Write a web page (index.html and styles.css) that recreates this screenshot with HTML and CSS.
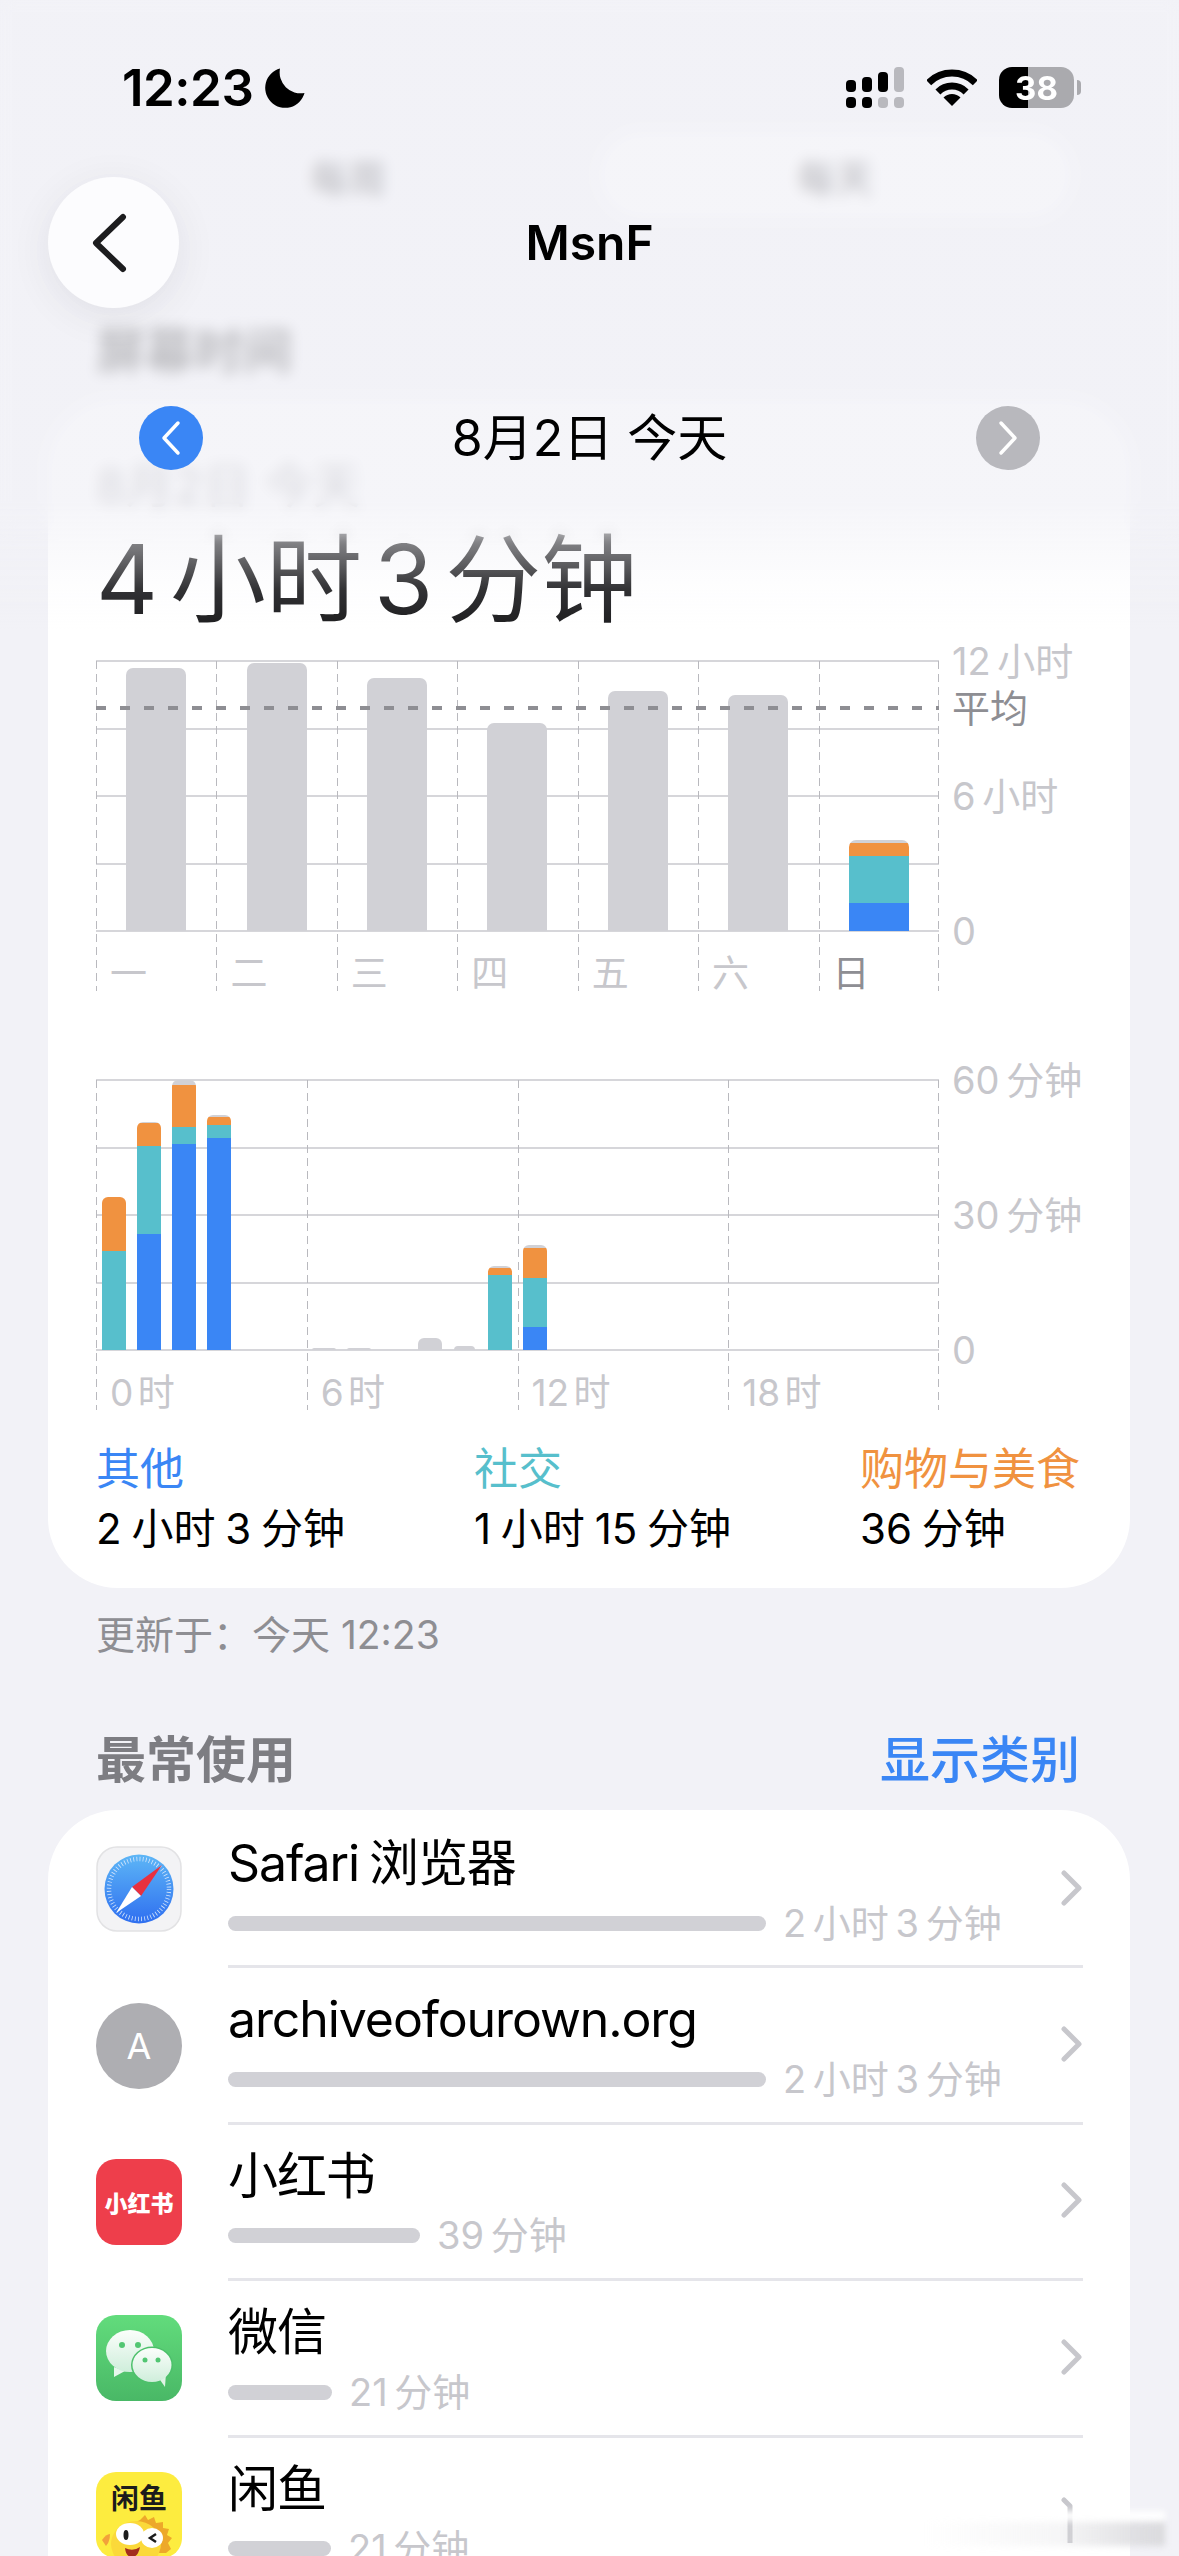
FILE: index.html
```html
<!DOCTYPE html>
<html lang="zh">
<head>
<meta charset="utf-8">
<title>屏幕时间</title>
<link rel="stylesheet" href="styles.css">
</head>
<body>
<main class="page">
  <div class="segment">
    <span class="seg-item">每周</span>
    <span class="seg-item seg-on">每天</span>
  </div>
  <h1 class="screen-title">屏幕时间</h1>

  <section class="card summary">
    <div class="date-under">8月2日 今天</div>
    <div class="total">4 小时 3 分钟</div>

    <div class="chart">
      <div class="plot">
        <div class="hlines"><i></i><i></i><i></i><i></i><i></i></div>
        <div class="cols week">
          <div class="col"><div class="slot"><div class="bar wide" style="height:263px"><b class="g" style="height:263px"></b></div></div><span class="tick">一</span></div>
          <div class="col"><div class="slot"><div class="bar wide" style="height:268px"><b class="g" style="height:268px"></b></div></div><span class="tick">二</span></div>
          <div class="col"><div class="slot"><div class="bar wide" style="height:253px"><b class="g" style="height:253px"></b></div></div><span class="tick">三</span></div>
          <div class="col"><div class="slot"><div class="bar wide" style="height:208px"><b class="g" style="height:208px"></b></div></div><span class="tick">四</span></div>
          <div class="col"><div class="slot"><div class="bar wide" style="height:240px"><b class="g" style="height:240px"></b></div></div><span class="tick">五</span></div>
          <div class="col"><div class="slot"><div class="bar wide" style="height:236px"><b class="g" style="height:236px"></b></div></div><span class="tick">六</span></div>
          <div class="col"><div class="slot"><div class="bar wide" style="height:91px"><b class="g" style="height:3px"></b><b class="o" style="height:13px"></b><b class="t" style="height:47px"></b><b class="bl" style="height:28px"></b></div></div><span class="tick tick-now">日</span></div>
        </div>
        <div class="avg"></div>
      </div>
      <div class="yaxis">
        <span>12 小时</span><span>6 小时</span><span>0</span>
        <span class="avg-label">平均</span>
      </div>
    </div>

    <div class="chart chart-day">
      <div class="plot">
        <div class="hlines"><i></i><i></i><i></i><i></i><i></i></div>
        <div class="cols day">
          <div class="col"><div class="slot"></div><span class="tick">0 时</span></div>
          <div class="col"><div class="slot"></div><span class="tick">6 时</span></div>
          <div class="col"><div class="slot"></div><span class="tick">12 时</span></div>
          <div class="col"><div class="slot"></div><span class="tick">18 时</span></div>
        </div>
        <div class="hours">
          <div class="hour"><div class="bar"><b class="o" style="height:54px"></b><b class="t" style="height:99px"></b></div></div>
          <div class="hour"><div class="bar"><b class="g" style="height:1px"></b><b class="o" style="height:23px"></b><b class="t" style="height:88px"></b><b class="bl" style="height:116px"></b></div></div>
          <div class="hour"><div class="bar"><b class="g" style="height:5px"></b><b class="o" style="height:42px"></b><b class="t" style="height:17px"></b><b class="bl" style="height:206px"></b></div></div>
          <div class="hour"><div class="bar"><b class="g" style="height:2px"></b><b class="o" style="height:8px"></b><b class="t" style="height:13px"></b><b class="bl" style="height:212px"></b></div></div>
          <div class="hour"></div>
          <div class="hour"></div>
          <div class="hour"><div class="bar"><b class="g" style="height:2px"></b></div></div>
          <div class="hour"><div class="bar"><b class="g" style="height:2px"></b></div></div>
          <div class="hour"></div>
          <div class="hour"><div class="bar"><b class="g" style="height:12px"></b></div></div>
          <div class="hour"><div class="bar bar-thin"><b class="g" style="height:4px"></b></div></div>
          <div class="hour"><div class="bar"><b class="g" style="height:2px"></b><b class="o" style="height:7px"></b><b class="t" style="height:75px"></b></div></div>
          <div class="hour"><div class="bar"><b class="g" style="height:3px"></b><b class="o" style="height:30px"></b><b class="t" style="height:49px"></b><b class="bl" style="height:23px"></b></div></div>
        </div>
      </div>
      <div class="yaxis yaxis-day">
        <span>60 分钟</span><span>30 分钟</span><span>0</span>
      </div>
    </div>

    <div class="legend">
      <div><div class="leg-name c-blue">其他</div><div class="leg-val">2 小时 3 分钟</div></div>
      <div><div class="leg-name c-teal">社交</div><div class="leg-val">1 小时 15 分钟</div></div>
      <div><div class="leg-name c-orange">购物与美食</div><div class="leg-val">36 分钟</div></div>
    </div>
  </section>

  <p class="updated">更新于：今天 12:23</p>

  <div class="section-head">
    <h2 class="section-title">最常使用</h2>
    <span class="section-link">显示类别</span>
  </div>

  <section class="card apps">
    <div class="row">
      <svg class="icon" viewBox="0 0 86 86">
        <defs><linearGradient id="sf" x1="0" y1="0" x2="0" y2="1"><stop offset="0" stop-color="#5db6f6"/><stop offset="1" stop-color="#2f6ff0"/></linearGradient></defs>
        <rect x="1" y="1" width="84" height="84" rx="20" fill="#f3f3f5" stroke="#e2e2e4" stroke-width="1.5"/>
        <circle cx="43" cy="43" r="34.5" fill="url(#sf)"/>
        <circle cx="43" cy="43" r="30" fill="none" stroke="#d6e6fb" stroke-width="4.5" stroke-dasharray="0.8 2.35"/>
        <polygon points="66,19 36,41 45,50" fill="#e8313f"/>
        <polygon points="20,67 36,41 45,50" fill="#fff"/>
      </svg>
      <div class="row-body">
        <div class="row-main">
          <div class="app-name">Safari 浏览器</div>
          <div class="usage"><span class="use-bar" style="width:538px"></span><span class="use-time">2 小时 3 分钟</span></div>
        </div>
        <svg class="chev" viewBox="0 0 22 36"><path d="M3 3 L18 18 L3 33"/></svg>
      </div>
    </div>
    <div class="row">
      <div class="icon site-icon">A</div>
      <div class="row-body">
        <div class="row-main">
          <div class="app-name">archiveofourown.org</div>
          <div class="usage"><span class="use-bar" style="width:538px"></span><span class="use-time">2 小时 3 分钟</span></div>
        </div>
        <svg class="chev" viewBox="0 0 22 36"><path d="M3 3 L18 18 L3 33"/></svg>
      </div>
    </div>
    <div class="row">
      <div class="icon xhs-icon">小红书</div>
      <div class="row-body">
        <div class="row-main">
          <div class="app-name">小红书</div>
          <div class="usage"><span class="use-bar" style="width:192px"></span><span class="use-time">39 分钟</span></div>
        </div>
        <svg class="chev" viewBox="0 0 22 36"><path d="M3 3 L18 18 L3 33"/></svg>
      </div>
    </div>
    <div class="row">
      <svg class="icon" viewBox="0 0 86 86">
        <defs>
          <linearGradient id="wx" x1="0" y1="0" x2="0" y2="1"><stop offset="0" stop-color="#62dc7c"/><stop offset="1" stop-color="#49b866"/></linearGradient>
          <linearGradient id="wb" x1="0" y1="0" x2="0" y2="1"><stop offset="0" stop-color="#fbfefb"/><stop offset="1" stop-color="#cfeedb"/></linearGradient>
        </defs>
        <rect width="86" height="86" rx="20" fill="url(#wx)"/>
        <path d="M18 52 L18 62 L29 56 Z" fill="#e6f7ec"/>
        <ellipse cx="34" cy="36" rx="24" ry="21" fill="url(#wb)"/>
        <circle cx="26" cy="30" r="3" fill="#52c672"/><circle cx="42" cy="30" r="3" fill="#52c672"/>
        <ellipse cx="56" cy="50" rx="21" ry="18.5" fill="#4cc06a"/>
        <path d="M62 62 L69 72 L70 58 Z" fill="#dff3e6"/>
        <ellipse cx="56" cy="50" rx="19.5" ry="17" fill="url(#wb)"/>
        <circle cx="49" cy="45" r="2.5" fill="#52c672"/><circle cx="62" cy="45" r="2.5" fill="#52c672"/>
      </svg>
      <div class="row-body">
        <div class="row-main">
          <div class="app-name">微信</div>
          <div class="usage"><span class="use-bar" style="width:104px"></span><span class="use-time">21 分钟</span></div>
        </div>
        <svg class="chev" viewBox="0 0 22 36"><path d="M3 3 L18 18 L3 33"/></svg>
      </div>
    </div>
    <div class="row">
      <svg class="icon" viewBox="0 0 86 86">
        <rect width="86" height="86" rx="20" fill="#fdec3f"/>
        <text class="xy-text" x="43" y="37" text-anchor="middle">闲鱼</text>
        <path d="M44 48 l5 -5 l3 5 l6 -3 l2 6 l7 -1 l0 6 l6 1 l-2 6 l5 3 l-4 5 l3 6 l-5 4 H20 V60 Z" fill="#eda82a"/>
        <ellipse cx="40" cy="72" rx="25" ry="23" fill="#fbd93a"/>
        <ellipse cx="34" cy="62" rx="14" ry="11" fill="#fff"/>
        <ellipse cx="56" cy="66" rx="11" ry="10" fill="#fff"/>
        <ellipse cx="30" cy="63" rx="2.5" ry="5" fill="#1c1c1c"/>
        <path d="M60 62 l-6 4 l6 4" fill="none" stroke="#1c1c1c" stroke-width="2.5"/>
        <path d="M29 76 q8 4 15 -1 q-2 10 -8 10 q-6 0 -7 -9 Z" fill="#a32c1e"/>
        <path d="M6 68 q4 -6 8 -6 q0 8 -4 12 Z" fill="#f2a13a"/>
      </svg>
      <div class="row-body">
        <div class="row-main">
          <div class="app-name">闲鱼</div>
          <div class="usage"><span class="use-bar" style="width:103px"></span><span class="use-time">21 分钟</span></div>
        </div>
        <svg class="chev chev-cut" viewBox="0 0 22 46"><path d="M3 3 L9 9 V46"/></svg>
      </div>
    </div>
  </section>
</main>

<div class="frost"></div>
<div class="fade"></div>

<header class="top">
  <div class="status">
    <div class="clock">
      <span class="time">12:23</span>
      <svg class="moon" viewBox="0 0 40 40"><path d="M15 0.5 A20 20 0 1 0 39.5 25 A21 21 0 0 1 15 0.5 Z"/></svg>
    </div>
    <div class="status-icons">
      <svg class="signal" viewBox="0 0 58 41">
        <rect x="0" y="13" width="10" height="12" rx="4"/><rect x="16" y="10" width="10" height="15" rx="4"/><rect x="32" y="5" width="10" height="20" rx="4"/><rect class="off" x="48" y="0" width="10" height="25" rx="4"/>
        <rect x="0" y="30" width="10" height="11" rx="4"/><rect x="16" y="30" width="10" height="11" rx="4"/><rect class="off" x="32" y="30" width="10" height="11" rx="4"/><rect class="off" x="48" y="30" width="10" height="11" rx="4"/>
      </svg>
      <svg class="wifi" viewBox="0 0 50 37">
        <path d="M1.7 13.7 A33 33 0 0 1 48.3 13.7" fill="none" stroke="#000" stroke-width="7"/>
        <path d="M10.9 22.9 A20 20 0 0 1 39.1 22.9" fill="none" stroke="#000" stroke-width="7"/>
        <path d="M25 37 L16.5 28.5 A12 12 0 0 1 33.5 28.5 Z"/>
      </svg>
      <div class="battery">
        <span class="batt-level">38</span>
        <i class="batt-tip"></i>
      </div>
    </div>
  </div>

  <div class="nav">
    <button class="back" type="button" aria-label="返回">
      <svg viewBox="0 0 36 60"><path d="M32 4 L5 30 L32 56"/></svg>
    </button>
    <div class="nav-title">MsnF</div>
  </div>

  <div class="date-row">
    <span class="round round-on"><svg viewBox="0 0 24 36"><path d="M19 3 L5 18 L19 33"/></svg></span>
    <span class="date-text">8月2日 今天</span>
    <span class="round round-off"><svg viewBox="0 0 24 36"><path d="M5 3 L19 18 L5 33"/></svg></span>
  </div>
</header>

<div class="smudge"></div>
</body>
</html>
```
FILE: styles.css
```css
* { box-sizing: border-box; }
html, body {
  margin: 0;
  width: 1179px;
  height: 2556px;
  overflow: hidden;
  background: #f2f2f7;
}
body {
  position: relative;
  font-family: "Inter", "Noto Sans CJK SC", sans-serif;
  color: #000;
}
h1, h2, p { margin: 0; font: inherit; }

.page { padding-top: 133px; }

/* blurred content scrolled under the header */
.segment {
  display: flex;
  margin: 0 109px 0 96px;
  height: 84px;
}
.seg-item {
  flex: 1;
  display: flex;
  align-items: center;
  justify-content: center;
  font-size: 38px;
  font-weight: 700;
  color: #3c3c40;
  border-radius: 42px;
}
.seg-on { background: #fff; flex: 0 0 470px; }
.screen-title {
  margin: 105px 0 18px 96px;
  font-size: 49px;
  line-height: 60px;
  font-weight: 700;
  color: #000;
}

.card {
  margin: 0 49px 0 48px;
  background: #fff;
  border-radius: 70px;
}
.summary { padding: 56px 50px 29px 48px; }
.date-under {
  font-size: 48px;
  line-height: 60px;
  color: #808085;
}
.total {
  margin-top: 9px;
  height: 108px;
  font-size: 96px;
  line-height: 108px;
  color: #1c1c1e;
  word-spacing: -15px;
  white-space: nowrap;
}

/* charts */
.chart {
  display: flex;
  gap: 13px;
  margin-top: 28px;
}
.chart-day { margin-top: 89px; height: 330px; }
.plot {
  position: relative;
  flex: 0 0 843px;
  height: 330px;
}
.hlines {
  position: absolute;
  left: 0;
  right: 0;
  top: -1px;
  height: 272px;
  display: flex;
  flex-direction: column;
  justify-content: space-between;
}
.hlines i { display: block; height: 2px; background: #d6d6da; }
.cols {
  position: absolute;
  inset: 0;
  display: flex;
}
.col {
  flex: 1;
  display: flex;
  flex-direction: column;
  background: repeating-linear-gradient(#b9b9be 0 8px, transparent 8px 13px) left top / 1px 100% no-repeat;
}
.col:last-child {
  background:
    repeating-linear-gradient(#b9b9be 0 8px, transparent 8px 13px) left top / 1px 100% no-repeat,
    repeating-linear-gradient(#b9b9be 0 8px, transparent 8px 13px) right top / 1px 100% no-repeat;
}
.slot {
  height: 270px;
  flex: none;
  display: flex;
  align-items: flex-end;
  justify-content: center;
}
.tick {
  font-size: 37px;
  line-height: 48px;
  margin-top: 19px;
  padding-left: 14px;
  color: #c7c7cc;
  word-spacing: -6px;
  white-space: nowrap;
}
.tick-now { color: #8e8e93; }

.bar {
  display: flex;
  flex-direction: column;
  width: 24px;
  border-radius: 6px 6px 0 0;
  overflow: hidden;
}
.bar-thin { width: 21px; }
.bar.wide { width: 60px; border-radius: 7px 7px 0 0; }
.bar b { display: block; flex: none; }
.g { background: #d1d1d6; }
.o { background: #f09240; }
.t { background: #57bfcc; }
.bl { background: #3a86f5; }

.avg {
  position: absolute;
  left: 0;
  right: 0;
  top: 45px;
  height: 4px;
  background: repeating-linear-gradient(90deg, #8e8e93 0 10px, transparent 10px 24px);
}

.hours {
  position: absolute;
  left: 0;
  top: 0;
  width: 843px;
  height: 270px;
  display: grid;
  grid-template-columns: repeat(24, 1fr);
  grid-template-rows: 270px;
}
.hour {
  display: flex;
  align-items: flex-end;
  justify-content: center;
}

.yaxis {
  position: relative;
  flex: 1;
  height: 310px;
  margin-top: -20px;
  display: flex;
  flex-direction: column;
  justify-content: space-between;
  font-size: 38px;
  line-height: 40px;
  color: #c7c7cc;
  word-spacing: -4px;
  white-space: nowrap;
}
.avg-label {
  position: absolute;
  left: 0;
  top: 47px;
  color: #8e8e93;
}

/* legend */
.legend {
  display: flex;
  justify-content: space-between;
  margin-top: 31px;
}
.leg-name {
  font-size: 44px;
  line-height: 56px;
}
.leg-val {
  margin-top: 2px;
  font-size: 42px;
  line-height: 60px;
  word-spacing: -2px;
  white-space: nowrap;
}
.c-blue { color: #3a86f5; }
.c-teal { color: #57bfcc; }
.c-orange { color: #f09240; }

.updated {
  margin: 22px 0 0 96px;
  font-size: 39px;
  line-height: 50px;
  color: #8e8e93;
}
.section-head {
  display: flex;
  justify-content: space-between;
  align-items: center;
  margin: 66px 99px 24px 96px;
  height: 60px;
}
.section-title {
  font-size: 50px;
  font-weight: 600;
  color: #7d7d82;
}
.section-link {
  font-size: 50px;
  font-weight: 500;
  color: #3a86f5;
}

/* app rows */
.apps { padding: 2px 0 0 48px; height: 1000px; }
.row {
  display: flex;
  align-items: center;
  gap: 46px;
  height: 156.4px;
}
.icon {
  flex: 0 0 86px;
  width: 86px;
  height: 86px;
  display: block;
  margin-top: -2px;
}
.site-icon {
  display: flex;
  align-items: center;
  justify-content: center;
  border-radius: 50%;
  background: #aeaeb2;
  color: #fff;
  font-size: 36px;
}
.xhs-icon {
  display: flex;
  align-items: center;
  justify-content: center;
  border-radius: 20px;
  background: #ee3e4b;
  color: #fff;
  font-size: 23px;
  font-weight: 900;
}
.xy-text {
  font-size: 28px;
  font-weight: 700;
  fill: #1c1c1c;
}
.row-body {
  flex: 1;
  align-self: stretch;
  display: flex;
  align-items: center;
  margin-right: 47px;
  border-bottom: 3px solid #e5e5ea;
}
.row:last-child .row-body { border-bottom: 0; }
.row-main {
  flex: 1;
  align-self: flex-start;
  padding-top: 21px;
}
.app-name {
  font-size: 50px;
  line-height: 60px;
  letter-spacing: -1.1px;
  word-spacing: -3px;
}
.usage {
  display: flex;
  align-items: center;
  gap: 17px;
  margin-top: 7px;
  height: 40px;
}
.use-bar {
  flex: none;
  height: 15px;
  margin-top: 6px;
  border-radius: 8px;
  background: #d1d1d6;
}
.use-time {
  font-size: 38px;
  color: #c7c7cc;
  word-spacing: -4px;
}
.chev {
  flex: none;
  width: 22px;
  height: 36px;
  margin: -2px 0 0;
}
.chev path {
  fill: none;
  stroke: #c7c7cc;
  stroke-width: 5;
  stroke-linecap: round;
  stroke-linejoin: round;
}
.chev-cut { height: 46px; margin-top: 8px; }

/* header layers */
.frost {
  position: absolute;
  left: 0;
  top: 0;
  width: 100%;
  height: 545px;
  -webkit-backdrop-filter: blur(7px);
  backdrop-filter: blur(7px);
  -webkit-mask-image: linear-gradient(#000 0, #000 92%, transparent 100%);
  mask-image: linear-gradient(#000 0, #000 92%, transparent 100%);
}
.fade {
  position: absolute;
  left: 0;
  top: 0;
  width: 100%;
  height: 630px;
  background: linear-gradient(rgba(242,242,247,.78) 0, rgba(242,242,247,.78) 500px, rgba(242,242,247,.42) 550px, rgba(242,242,247,.1) 590px, rgba(242,242,247,0) 630px);
}
.top {
  position: absolute;
  left: 0;
  top: 0;
  width: 100%;
}
.status {
  display: flex;
  justify-content: space-between;
  align-items: center;
  margin-top: 67px;
  padding: 0 105px 0 122px;
  height: 41px;
}
.clock { display: flex; align-items: center; gap: 12px; }
.time {
  font-size: 51px;
  line-height: 50px;
  font-weight: 600;
  letter-spacing: -0.5px;
}
.moon { width: 40px; height: 40px; }
.status-icons { display: flex; align-items: center; }
.signal { width: 58px; height: 41px; }
.signal .off { fill: #b9b9be; }
.wifi { width: 50px; height: 37px; margin-left: 23px; }
.battery {
  position: relative;
  width: 75px;
  height: 41px;
  margin-left: 22px;
  border-radius: 13px;
  background: linear-gradient(90deg, #000 0 29px, #aaaaae 29px);
  display: flex;
  align-items: center;
  justify-content: center;
}
.batt-level {
  font-size: 33px;
  font-weight: 700;
  color: #fff;
}
.batt-tip {
  position: absolute;
  left: 78px;
  top: 13px;
  width: 4px;
  height: 15px;
  border-radius: 0 4px 4px 0;
  background: #aaaaae;
}

.nav {
  display: grid;
  grid-template-columns: 131px 1fr 131px;
  align-items: center;
  margin-top: 69px;
  padding: 0 48px;
  height: 131px;
}
.back {
  width: 131px;
  height: 131px;
  padding: 0;
  border: 0;
  border-radius: 50%;
  background: #fcfcfe;
  box-shadow: 0 8px 40px rgba(0,0,0,.08);
  display: flex;
  align-items: center;
  justify-content: center;
}
.back svg { width: 36px; height: 60px; margin-left: -10px; }
.back path {
  fill: none;
  stroke: #1c1c1e;
  stroke-width: 6;
  stroke-linecap: round;
  stroke-linejoin: round;
}
.nav-title {
  text-align: center;
  font-size: 48px;
  font-weight: 600;
}
.date-row {
  display: flex;
  justify-content: space-between;
  align-items: center;
  margin-top: 98px;
  padding: 0 139px;
  height: 64px;
}
.date-text { font-size: 50px; line-height: 60px; }
.round {
  width: 64px;
  height: 64px;
  border-radius: 50%;
  display: flex;
  align-items: center;
  justify-content: center;
}
.round svg { width: 24px; height: 36px; }
.round path {
  fill: none;
  stroke: #fff;
  stroke-width: 3.5;
  stroke-linecap: round;
  stroke-linejoin: round;
}
.round-on { background: #3a86f5; }
.round-off { background: #b8b8bd; }

/* erased watermark in the photographed screen */
.smudge {
  position: absolute;
  left: 925px;
  top: 2522px;
  width: 240px;
  height: 24px;
  background: linear-gradient(90deg, rgba(225,225,228,0) 0, rgba(225,225,228,.3) 55%, #dadadd 100%);
  filter: blur(3px);
}
.smudge::before {
  content: "";
  position: absolute;
  left: 130px;
  right: 0;
  top: -11px;
  height: 10px;
  background: #fff;
}
```
